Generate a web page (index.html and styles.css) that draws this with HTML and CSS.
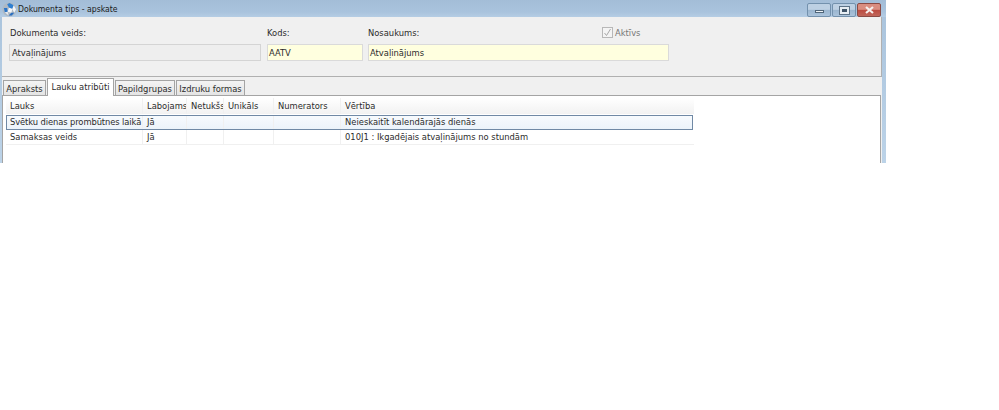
FILE: index.html
```html
<!DOCTYPE html>
<html lang="lv">
<head>
<meta charset="utf-8">
<title>Dokumenta tips - apskate</title>
<link rel="stylesheet" href="styles.css">
</head>
<body>
<div class="window">
  <div class="titlebar">
    <svg class="appicon" width="15" height="15" viewBox="0 0 16 16"><circle cx="8" cy="8" r="7.500" fill="#aeb9c4"/><path d="M8 1 12.500 3.500 11 7.500 7.500 6 5.500 2.500z" fill="#2f7fd0"/><path d="M12.500 3.500 15 8 13 11.500 11 7.500z" fill="#f1f4f7"/><path d="M7.500 6 11 7.500 10 11.500 6 10.500z" fill="#f4f6f8"/><path d="M2 6.500 5.500 6.500 6 10.500 3 11z" fill="#2a75c8"/><path d="M10 11.500 13 11.500 10.500 14.500 7 14.500z" fill="#2a6fc0"/><path d="M3 11 6 10.500 7 14.500z" fill="#e6ebf0"/></svg>
    <span class="title">Dokumenta tips - apskate</span>
    <div class="controls">
      <div class="ctl"><span class="min"></span></div>
      <div class="ctl"><span class="max"></span></div>
      <div class="ctl close"><svg width="11" height="8" viewBox="0 0 11 8"><path d="M2 1 9 7M9 1 2 7" stroke="#f6f0ee" stroke-width="2.200" fill="none"/></svg></div>
    </div>
  </div>
  <div class="client">
    <div class="form">
      <div class="field f1"><label>Dokumenta veids:</label><div class="input ro">Atvaļinājums</div></div>
      <div class="field f2"><label>Kods:</label><div class="input req">AATV</div></div>
      <div class="field f3"><label>Nosaukums:</label><div class="input req">Atvaļinājums</div></div>
      <div class="active"><span class="check"><svg width="9" height="9" viewBox="0 0 9 9"><path d="M1.500 5 3.500 7.500 7.500 1" fill="none" stroke="#a8a8a8" stroke-width="1"/></svg></span>Aktīvs</div>
    </div>
    <div class="tabs">
      <div class="tab t1">Apraksts</div>
      <div class="tab t2 on">Lauku atribūti</div>
      <div class="tab t3">Papildgrupas</div>
      <div class="tab t4">Izdruku formas</div>
    </div>
    <div class="panel">
      <div class="table">
        <div class="row head">
          <div class="c c1">Lauks</div><div class="c c2">Labojams</div><div class="c c3">Netukšs</div><div class="c c4">Unikāls</div><div class="c c5">Numerators</div><div class="c c6">Vērtība</div>
        </div>
        <div class="row sel">
          <div class="c c1">Svētku dienas prombūtnes laikā</div><div class="c c2">Jā</div><div class="c c3"></div><div class="c c4"></div><div class="c c5"></div><div class="c c6">Neieskaitīt kalendārajās dienās</div>
        </div>
        <div class="row last">
          <div class="c c1">Samaksas veids</div><div class="c c2">Jā</div><div class="c c3"></div><div class="c c4"></div><div class="c c5"></div><div class="c c6">010J1 : Ikgadējais atvaļinājums no stundām</div>
        </div>
      </div>
    </div>
  </div>
</div>
</body>
</html>
```
FILE: styles.css
```css
html, body { margin: 0; padding: 0; background: #fff; }
body { font-family: "DejaVu Sans Condensed", "DejaVu Sans", sans-serif; font-size: 9.3px; color: #2b2b2b; height: 410px; overflow: hidden; }
.window { width: 886px; height: 163px; background: linear-gradient(#a9c3dc, #bcd3e8); overflow: hidden; }
.titlebar { height: 17px; display: flex; align-items: center; background: linear-gradient(#a3bdd7, #a9c3dd 70%, #b5cde4); }
.appicon { margin: 1px 1px 0 2px; }
.title { color: #1a1a1a; font-size: 8.6px; }
.controls { margin-left: auto; margin-right: 5px; display: flex; gap: 1px; align-self: flex-start; margin-top: 3px; }
.ctl { width: 22px; height: 12px; border: 1px solid #7391ad; border-radius: 2px; background: linear-gradient(#bdd0e3 45%, #9ab5cf 50%, #aac3db); display: flex; align-items: center; justify-content: center; }
.close { background: linear-gradient(#d98d80 45%, #bb4a3f 50%, #c0665a); border-color: #8a4a44; }
.min { width: 9px; height: 3px; background: #eef3f7; border: 1px solid #4f6579; box-sizing: border-box; margin-top: 3px; }
.max { width: 9px; height: 7px; background: #3f5468; border: 2px solid #e6edf3; outline: 1px solid #5d7388; box-sizing: border-box; }
.client { margin: 0 4px 0 2px; background: #f0f0f0; height: 146px; }
.form { height: 60px; box-sizing: border-box; border-bottom: 1px solid #b0b0b0; border-right: 1px solid #b0b0b0; position: relative; display: flex; }
.field { display: flex; flex-direction: column; }
.field label { margin-top: 8px; height: 15px; line-height: 15px; }
.f1 { width: 252px; margin-left: 7px; }
.f1 label { padding-left: 1px; }
.f2 { width: 96px; margin-left: 6px; }
.f3 { width: 301px; margin-left: 5px; }
.input { height: 17px; line-height: 15px; margin-top: 4px; box-sizing: border-box; border: 1px solid #dcdcdc; border-top-color: #c4c4cc; padding-left: 1px; }
.ro { background: #eeeeee; border-color: #d4d4d4; padding-left: 2px; }
.req { background: #ffffdf; border-color: #dadada; }
.active { position: absolute; left: 600px; top: 9px; display: flex; align-items: center; gap: 2px; color: #777; height: 13px; }
.check { width: 9px; height: 9px; border: 1px solid #b8b8b8; display: flex; background: #f4f4f4; }
.tabs { display: flex; height: 18px; align-items: flex-end; padding-left: 1px; }
.tab { height: 15px; line-height: 15px; box-sizing: border-box; border: 1px solid #a4a4a4; border-bottom: 0; background: linear-gradient(#f4f4f4, #e4e4e4); text-align: center; margin-right: 1px; white-space: nowrap; }
.t1 { width: 43px; }
.t2 { width: 67px; height: 18px; line-height: 15px; background: #fff; position: relative; top: 1px; }
.t3 { width: 60px; }
.t4 { width: 69px; }
.panel { margin-right: 1px; height: 68px; box-sizing: border-box; border: 1px solid #a4a4a4; border-bottom: 0; background: #fff; padding: 2px 0 0 3px; }
.table { width: 688px; }
.row { display: flex; height: 15px; line-height: 14px; border-bottom: 1px solid #f0f0f0; box-sizing: border-box; }
.head { height: 16px; background: linear-gradient(#fff, #f2f2f2); line-height: 15px; border-bottom: 0; }
.sel { height: 15px; background: linear-gradient(#f8fbfe, #ecf3fa); outline: 1px solid #7089a5; outline-offset: -1px; margin-right: 1px; margin-top: 1px; }
.sel .c1 { letter-spacing: -0.1px; }
.last { line-height: 14px; }
.c { box-sizing: border-box; padding-left: 4px; border-right: 1px solid #f0f0f0; white-space: nowrap; overflow: hidden; }
.c1 { width: 137px; }
.c2 { width: 44px; }
.c3 { width: 37px; }
.c4 { width: 50px; }
.c5 { width: 67px; }
.c6 { flex: 1; border-right: 0; }
```
